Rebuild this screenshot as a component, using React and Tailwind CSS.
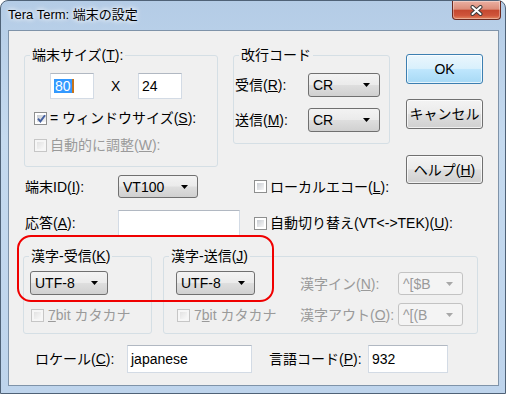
import React from "react";

function Check({ checked, disabled }) {
  return (
    <span
      className={`w-[13px] h-[13px] shrink-0 border p-[2px] flex ${
        disabled ? "border-[#c6c6c6] bg-[#f6f6f6]" : "border-[#8e8f8f] bg-white"
      }`}
    >
      <span
        className={`flex-1 flex items-center justify-center ${
          disabled
            ? "bg-[linear-gradient(135deg,#e2e2e2,#f8f8f8)]"
            : "bg-[linear-gradient(135deg,#c9cdd3,#f7f7f7)]"
        }`}
      >
        {checked && (
          <svg width="9" height="9" viewBox="0 0 9 9" className="shrink-0">
            <path d="M1 4.6 L3.4 7.4 L8 1.2" fill="none" stroke="#45609f" strokeWidth="1.9" />
          </svg>
        )}
      </span>
    </span>
  );
}

function Combo({ value, className, disabled }) {
  return (
    <div
      className={`rounded-[3px] border flex items-center justify-between pl-[4px] pr-[9px] leading-[20px] ${
        disabled
          ? "border-[#c3c3c3] bg-[#f4f4f4] text-[#9a9a9a]"
          : "border-[#707070] bg-[linear-gradient(180deg,#f3f3f3_0%,#ebebeb_48%,#dedede_52%,#d0d0d0_100%)]"
      } ${className}`}
    >
      <span>{value}</span>
      <svg width="7" height="4" viewBox="0 0 7 4">
        <polygon points="0,0 7,0 3.5,4" fill={disabled ? "#a8a8a8" : "#000"} />
      </svg>
    </div>
  );
}

function TextBox({ className, children }) {
  return (
    <div
      className={`bg-white border border-[#d3dbe5] border-t-[#b1b8c2] flex items-center pl-[3px] leading-[20px] ${className}`}
    >
      {children}
    </div>
  );
}

function Button({ children, primary, className }) {
  return (
    <div
      className={`w-[77px] rounded-[3px] border flex items-center justify-center leading-[20px] shadow-[inset_0_0_0_1px_rgba(255,255,255,0.7)] ${
        primary
          ? "border-[#3c7fb1] bg-[linear-gradient(180deg,#eaf6fd_0%,#d9f0fc_48%,#bee6fd_52%,#a7d9f5_100%)]"
          : "border-[#707070] bg-[linear-gradient(180deg,#f3f3f3_0%,#ebebeb_48%,#dedede_52%,#d0d0d0_100%)]"
      } ${className}`}
    >
      {children}
    </div>
  );
}

export default function App() {
  return (
    <div className="w-[506px] h-[394px] bg-white font-['Liberation_Sans','Noto_Sans_CJK_JP',sans-serif] text-[14px] text-black">
      <div className="w-[506px] h-[394px] rounded-t-[8px] border border-[#4f6277] bg-[linear-gradient(180deg,#b4cce6_0%,#c5daef_35%,#bed4ec_100%)] flex flex-col">
        {/* title bar */}
        <div className="h-[29px] flex justify-between items-start pl-[7px] pr-[4px]">
          <div className="mt-[5px] leading-[18px] text-[13px] [text-shadow:0_0_6px_#fff,0_0_4px_#fff]">
            Tera Term: 端末の設定
          </div>
          <div className="w-[49px] h-[19px] rounded-b-[4px] border border-t-0 border-[#6c2a20] bg-[linear-gradient(180deg,#eab0a2_0%,#dc8d7a_45%,#c5482f_52%,#cf553b_80%,#e3865f_100%)] shadow-[inset_0_0_0_1px_rgba(255,255,255,0.35)] flex items-center justify-center">
            <svg width="13" height="11" viewBox="0 0 13 11">
              <path d="M2.5 2 L10.5 9 M10.5 2 L2.5 9" stroke="#3a3a3a" strokeWidth="4" strokeLinecap="round" />
              <path d="M2.5 2 L10.5 9 M10.5 2 L2.5 9" stroke="#fff" strokeWidth="2" strokeLinecap="round" />
            </svg>
          </div>
        </div>

        {/* client area */}
        <div className="ml-[7px] w-[491px] h-[356px] border border-[#7f93a9] bg-[#f0f0f0] relative flex flex-col">
          {/* top block */}
          <div className="flex">
            <div className="flex flex-col">
              <div className="flex items-start">
                <fieldset className="ml-[15px] mt-[14px] w-[194px] h-[122px] border border-[#d5dfe5] rounded-[3px]">
                  <legend className="ml-[5px] px-[2px] leading-[20px]">
                    端末サイズ(<u>T</u>):
                  </legend>
                  <div className="mt-[8px] flex items-center">
                    <TextBox className="ml-[25px] w-[44px] h-[26px]">
                      <span className="bg-[#3399ff] text-white leading-[14px] px-[1px]">80</span>
                      <span className="w-[2px] h-[14px] bg-[#c8741c]" />
                    </TextBox>
                    <span className="ml-[17px] w-[10px] leading-[20px]">X</span>
                    <TextBox className="ml-[17px] w-[44px] h-[26px]">24</TextBox>
                  </div>
                  <div className="mt-[9px] ml-[9px] flex items-center gap-[3px] leading-[20px]">
                    <Check checked />
                    <span>
                      = ウィンドウサイズ(<u>S</u>):
                    </span>
                  </div>
                  <div className="mt-[7px] ml-[9px] flex items-center gap-[3px] leading-[20px] text-[#9a9a9a]">
                    <Check disabled />
                    <span>
                      自動的に調整(<u>W</u>):
                    </span>
                  </div>
                </fieldset>

                <fieldset className="ml-[15px] mt-[14px] w-[157px] h-[99px] border border-[#d5dfe5] rounded-[3px]">
                  <legend className="ml-[5px] px-[2px] leading-[20px]">改行コード</legend>
                  <div className="mt-[8px] ml-[1px] flex items-center">
                    <span className="w-[73px]">
                      受信(<u>R</u>):
                    </span>
                    <Combo value="CR" className="w-[72px] h-[24px]" />
                  </div>
                  <div className="mt-[11px] ml-[1px] flex items-center">
                    <span className="w-[73px]">
                      送信(<u>M</u>):
                    </span>
                    <Combo value="CR" className="w-[72px] h-[24px]" />
                  </div>
                </fieldset>
              </div>

              <div className="mt-[8px] flex items-center leading-[20px]">
                <span className="ml-[16px] w-[93px]">
                  端末ID(<u>I</u>):
                </span>
                <Combo value="VT100" className="w-[80px] h-[23px]" />
                <div className="ml-[56px] flex items-center gap-[3px]">
                  <Check />
                  <span>
                    ローカルエコー(<u>L</u>):
                  </span>
                </div>
              </div>
            </div>

            <div className="ml-[16px] flex flex-col">
              <Button primary className="mt-[23px] h-[30px]">OK</Button>
              <Button className="mt-[15px] h-[30px]">キャンセル</Button>
              <Button className="mt-[26px] h-[29px]">
                ヘルプ(<u>H</u>)
              </Button>
            </div>
          </div>

          {/* answerback row */}
          <div className="mt-[12px] flex items-center leading-[20px]">
            <span className="ml-[16px] w-[93px]">
              応答(<u>A</u>):
            </span>
            <TextBox className="w-[122px] h-[26px]" />
            <div className="ml-[14px] flex items-center gap-[3px]">
              <Check />
              <span>
                自動切り替え(VT&lt;-&gt;TEK)(<u>U</u>):
              </span>
            </div>
          </div>

          {/* kanji groups */}
          <div className="mt-[10px] flex items-start">
            <fieldset className="ml-[14px] w-[129px] h-[88px] border border-[#d5dfe5] rounded-[3px]">
              <legend className="ml-[5px] px-[2px] leading-[20px]">
                漢字-受信(<u>K</u>)
              </legend>
              <Combo value="UTF-8" className="mt-[5px] ml-[6px] w-[78px] h-[24px]" />
              <div className="mt-[10px] ml-[7px] flex items-center gap-[4px] leading-[20px] text-[#9a9a9a]">
                <Check disabled />
                <span>
                  <u>7</u>bit カタカナ
                </span>
              </div>
            </fieldset>

            <fieldset className="ml-[11px] w-[315px] h-[88px] border border-[#d5dfe5] rounded-[3px]">
              <legend className="ml-[5px] px-[2px] leading-[20px]">
                漢字-送信(<u>J</u>)
              </legend>
              <div className="flex items-start">
                <div className="ml-[12px] w-[124px] flex flex-col">
                  <Combo value="UTF-8" className="mt-[5px] w-[79px] h-[24px]" />
                  <div className="mt-[10px] ml-[1px] flex items-center gap-[4px] leading-[20px] text-[#9a9a9a]">
                    <Check disabled />
                    <span>
                      7<u>b</u>it カタカナ
                    </span>
                  </div>
                </div>
                <div className="mt-[6px] grid grid-cols-[98px_65px] gap-y-[8px] items-center text-[#9a9a9a] leading-[20px]">
                  <span>
                    漢字イン(<u>N</u>):
                  </span>
                  <Combo value="^[$B" disabled className="w-[65px] h-[23px]" />
                  <span>
                    漢字アウト(<u>O</u>):
                  </span>
                  <Combo value="^[(B" disabled className="w-[65px] h-[23px]" />
                </div>
              </div>
            </fieldset>
          </div>

          {/* locale row */}
          <div className="mt-[11px] flex items-center leading-[20px]">
            <span className="ml-[26px] w-[92px]">
              ロケール(<u>C</u>):
            </span>
            <TextBox className="w-[125px] h-[28px]">japanese</TextBox>
            <span className="ml-[17px] w-[99px]">
              言語コード(<u>P</u>):
            </span>
            <TextBox className="w-[80px] h-[28px]">932</TextBox>
          </div>

          {/* red annotation */}
          <div className="absolute left-[8px] top-[204px] w-[257px] h-[67px] border-2 border-[#f00000] rounded-[14px] pointer-events-none" />
        </div>
      </div>
    </div>
  );
}
